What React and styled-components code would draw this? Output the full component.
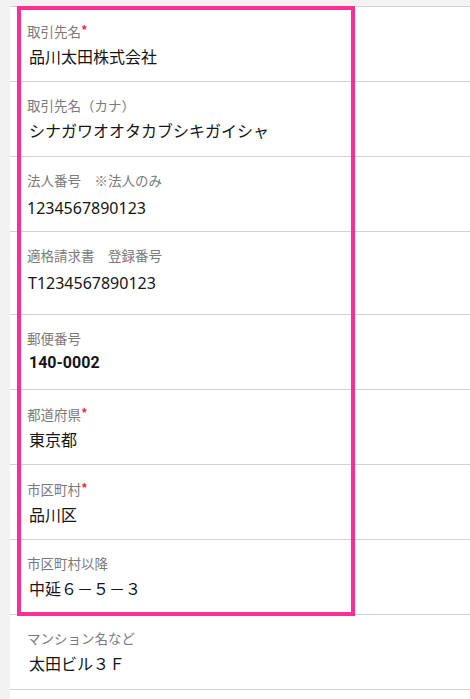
import React from 'react';
import styled, { createGlobalStyle } from 'styled-components';

const GlobalStyle = createGlobalStyle`
    html, body {
        margin: 0;
        padding: 0;
        background: #f2f2f2;
        overflow: hidden;
    }
    body {
        font-family: "Noto Sans CJK JP", "Noto Sans", sans-serif;
    }
`

const Page = styled.div`
    padding-top: 6px;
    padding-left: 10px;
    height: 699px;
    box-sizing: border-box;
`
const Panel = styled.section`
    background: #fff;
    border-top: 1px solid #d4d4d4;
    min-height: 100%;
`
const Group = styled.div`
    position: relative;
`
// ピンクの枠 (注釈として上に重ねる)
const Highlight = styled.div`
    position: absolute;
    top: -1px;
    left: 7px;
    bottom: -1px;
    width: 338px;
    border: 4px solid #fd2f96;
    box-sizing: border-box;
    pointer-events: none;
`
const Row = styled.div`
    height: ${props => props.tall ? 83 : 75}px;
    box-sizing: border-box;
    padding: 14px 17px 0;
    border-bottom: 1px solid #d2d2d2;
    display: flex;
    flex-direction: column;
    gap: 5px;
`
const Label = styled.div`
    font-size: 13.5px;
    line-height: 18px;
    color: #7a7a7a;
    white-space: pre;
`
const Required = styled.span`
    color: #e8262b;
    font-family: "Liberation Sans", sans-serif;
    font-weight: 700;
    font-size: 12px;
    vertical-align: 3px;
    margin-left: 1px;
`
const Value = styled.div`
    font-size: 16px;
    line-height: 22px;
    color: #151515;
    padding-left: ${props => props.indent ?? 2}px;
    font-family: ${props => props.digits ? '"Noto Sans", sans-serif' : '"Noto Sans CJK JP", sans-serif'};
    font-weight: ${props => props.bold ? 700 : 400};
    ${props => props.bold && 'font-family: Roboto, "Noto Sans", sans-serif;'}
    ${props => props.digits && 'padding-top: 3px;'}
`

const fields = [
    { label: '取引先名', required: true, value: '品川太田株式会社' },
    { label: '取引先名（カナ）', value: 'シナガワオオタカブシキガイシャ' },
    { label: '法人番号　※法人のみ', value: '1234567890123', digits: true, indent: 0 },
    { label: '適格請求書　登録番号', value: 'T1234567890123', digits: true, indent: 1, tall: true },
    { label: '郵便番号', value: '140-0002', bold: true },
    { label: '都道府県', required: true, value: '東京都' },
    { label: '市区町村', required: true, value: '品川区' },
    { label: '市区町村以降', value: '中延６－５－３' },
]

const Field = ({ f }) => (
    <Row tall={f.tall}>
        <Label>{f.label}{f.required && <Required>*</Required>}</Label>
        <Value digits={f.digits} bold={f.bold} indent={f.indent}>{f.value}</Value>
    </Row>
)

export default function App() {
    return <>
        <GlobalStyle />
        <Page>
            <Panel>
                <Group>
                    {fields.map(f => <Field key={f.label} f={f} />)}
                    <Highlight />
                </Group>
                <Field f={{ label: 'マンション名など', value: '太田ビル３Ｆ' }} />
            </Panel>
        </Page>
    </>
}
